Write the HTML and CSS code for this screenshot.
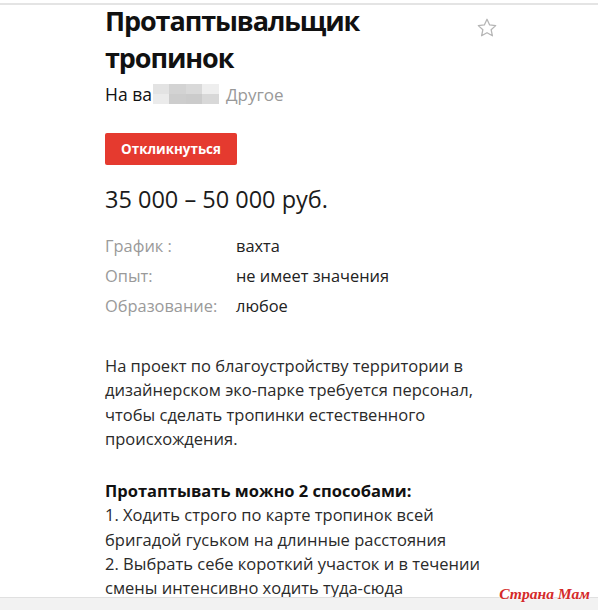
FILE: index.html
```html
<!doctype html>
<html lang="ru">
  <head>
    <meta charset="utf-8">
    <title>Протаптывальщик тропинок</title>
    <link rel="stylesheet" href="styles.css">
  </head>
  <body>
    <div class="topbar"></div>
    <div id="vacancy">
      <div class="head">
        <h1>Протаптывальщик тропинок</h1>
        <svg class="star" width="22" height="22" viewBox="0 0 24 24">
          <path d="M12 2.5l2.9 6.2 6.6.7-5 4.5 1.4 6.6L12 17.2l-5.9 3.3 1.4-6.6-5-4.5 6.6-.7z" fill="none" stroke="#b5b5b5" stroke-width="1.4" stroke-linejoin="round"/>
        </svg>
      </div>
      <div class="company">
        <span>На ва</span>
        <span class="blur">
          <i class="b1"></i><i class="b2"></i><i class="b3"></i><i class="b4"></i>
          <i class="b5"></i><i class="b6"></i><i class="b7"></i><i class="b8"></i>
        </span>
        <span class="muted">Другое</span>
      </div>
      <a class="respond" href="#">Откликнуться</a>
      <div class="salary">35 000 – 50 000 руб.</div>
      <div class="facts">
        <div class="label">График :</div><div>вахта</div>
        <div class="label">Опыт:</div><div>не имеет значения</div>
        <div class="label">Образование:</div><div>любое</div>
      </div>
      <p class="text">На проект по благоустройству территории в дизайнерском эко-парке требуется персонал, чтобы сделать тропинки естественного происхождения.</p>
      <p class="text">
        <b>Протаптывать можно 2 способами:</b><br>
        1. Ходить строго по карте тропинок всей бригадой гуськом на длинные расстояния<br>
        2. Выбрать себе короткий участок и в течении смены интенсивно ходить туда-сюда
      </p>
    </div>
    <div class="bottombar"></div>
    <div class="mark">Страна Мам</div>
  </body>
</html>
```
FILE: styles.css
```css
html, body {
  margin: 0;
  padding: 0;
}

body {
  font-family: "Open Sans", "Noto Sans", sans-serif;
  color: #222;
  background: #fff;
  width: 598px;
  height: 610px;
  overflow: hidden;
  position: relative;
}

.topbar {
  height: 3px;
  border-bottom: 2px solid #e4e4e4;
}

#vacancy {
  padding: 0 0 0 105px;
  width: 392px;
}

.head {
  display: flex;
  align-items: flex-start;
  margin-top: -2px;
}

h1 {
  flex: none;
  margin: 0;
  width: 300px;
  font-size: 27px;
  font-weight: 700;
  line-height: 36.5px;
  letter-spacing: -1.1px;
  color: #111;
}

.star {
  flex: none;
  margin: 14px 0 0 71px;
}

.company {
  display: flex;
  align-items: center;
  height: 22px;
  margin-top: 7px;
  font-size: 17.5px;
  color: #111;
}

.blur {
  display: grid;
  grid-template-columns: repeat(4, 16.5px);
  grid-template-rows: 10px 10px;
  margin: 0 7px 0 1px;
}

.blur i { display: block; }
.b1 { background: #e3e3e3; }
.b2 { background: #d3d3d3; }
.b3 { background: #d9d9d9; }
.b4 { background: #eeeeee; }
.b5 { background: #ebebeb; }
.b6 { background: #cdcdcd; }
.b7 { background: #cbcbcb; }
.b8 { background: #d8d8d8; }

.muted {
  color: #999;
  font-size: 17px;
}

.respond {
  display: inline-block;
  margin-top: 28px;
  width: 132px;
  height: 32px;
  line-height: 32px;
  text-align: center;
  background: #e53a2f;
  border-radius: 2px;
  color: #fff;
  font-size: 13.4px;
  font-weight: 700;
  text-decoration: none;
}

.salary {
  margin-top: 19px;
  font-size: 23.5px;
  line-height: 30px;
  color: #1b1b1b;
}

.facts {
  display: grid;
  grid-template-columns: 131px auto;
  grid-auto-rows: 30px;
  margin-top: 17px;
  font-size: 16.4px;
  line-height: 30px;
}

.label {
  color: #9a9a9a;
}

.text {
  margin: 33px 0 0;
  font-size: 16.5px;
  line-height: 24.3px;
  color: #2a2a2a;
}

.text + .text {
  margin-top: 28px;
}

.text b {
  color: #111;
}

.bottombar {
  position: absolute;
  left: 0;
  right: 0;
  top: 597px;
  height: 13px;
  background: #f2f2f2;
  border-top: 1px solid #e0e0e0;
}

.mark {
  position: absolute;
  right: 8px;
  top: 585px;
  font-family: "Liberation Serif", serif;
  font-style: italic;
  font-weight: 700;
  font-size: 15.6px;
  color: #d42a2a;
  text-shadow: 0 0 2px #fff, 0 0 2px #fff;
}
```
